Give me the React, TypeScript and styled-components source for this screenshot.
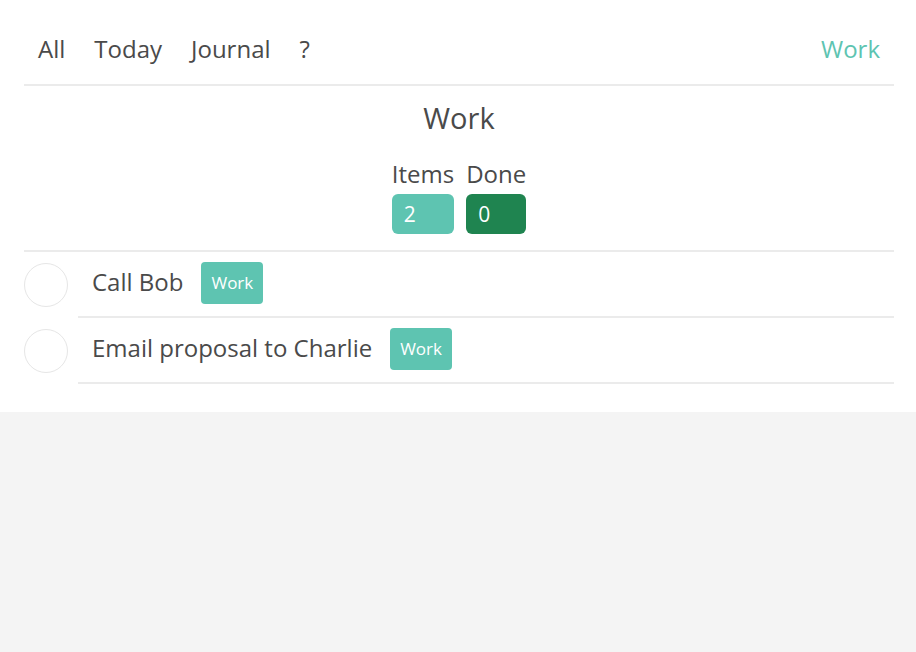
import React from "react";
import styled, { createGlobalStyle } from "styled-components";

const Global = createGlobalStyle`
  html, body { margin: 0; padding: 0; background: #f4f4f4; }
  body { font-family: "Open Sans", "Liberation Sans", sans-serif; color: #4a4a4a; }
`;

const Page = styled.div`
  background: #ffffff;
  padding: 0 22px 28px 24px;
`;

const Nav = styled.nav`
  display: flex;
  align-items: center;
  height: 86px;
  border-bottom: 2px solid #ebebeb;
  box-sizing: border-box;
  padding: 12px 14px 0;
  font-size: 24px;
`;

const NavLink = styled.a<{ $active?: boolean; $right?: boolean }>`
  color: ${(p) => (p.$active ? "#5ec4b1" : "#4a4a4a")};
  margin-right: ${(p) => (p.$right ? "0" : "29px")};
  margin-left: ${(p) => (p.$right ? "auto" : "0")};
  cursor: pointer;
`;

const Header = styled.section`
  display: flex;
  flex-direction: column;
  align-items: center;
  padding-top: 14px;
  padding-bottom: 16px;
  border-bottom: 2px solid #ebebeb;
`;

const Title = styled.h1`
  margin: 0;
  font-size: 29px;
  font-weight: 400;
  line-height: 36px;
`;

const Stats = styled.div`
  display: flex;
  gap: 12px;
  margin-top: 24px;
`;

const Stat = styled.div`
  display: flex;
  flex-direction: column;
  align-items: flex-start;
`;

const StatLabel = styled.div`
  font-size: 24px;
  line-height: 28px;
`;

const StatValue = styled.div<{ $bg: string; $w: number }>`
  width: ${(p) => p.$w}px;
  height: 40px;
  box-sizing: border-box;
  border-radius: 6px;
  background: ${(p) => p.$bg};
  color: #fff;
  font-size: 21px;
  line-height: 40px;
  padding-left: 12px;
  margin-top: 6px;
`;

const List = styled.ul`
  list-style: none;
  margin: 0;
  padding: 0;
`;

const Item = styled.li`
  display: flex;
  align-items: center;
  height: 66px;
`;

const Check = styled.span`
  flex: none;
  width: 44px;
  height: 44px;
  box-sizing: border-box;
  border: 1.5px solid #e6e6e6;
  border-radius: 50%;
  margin-right: 10px;
`;

const ItemBody = styled.div`
  flex: 1;
  align-self: stretch;
  display: flex;
  align-items: center;
  padding: 0 0 2px 14px;
  border-bottom: 2px solid #ebebeb;
`;

const ItemText = styled.span`
  font-size: 24px;
  margin-right: 18px;
  margin-bottom: 4px;
`;

const Tag = styled.span`
  background: #5ec4b1;
  color: #fff;
  font-size: 17px;
  border-radius: 4px;
  height: 42px;
  line-height: 41px;
  padding: 0 10px;
  box-sizing: border-box;
`;

export default function App() {
  return (
    <>
      <Global />
      <Page>
        <Nav>
          <NavLink>All</NavLink>
          <NavLink>Today</NavLink>
          <NavLink>Journal</NavLink>
          <NavLink>?</NavLink>
          <NavLink $active $right>Work</NavLink>
        </Nav>
        <Header>
          <Title>Work</Title>
          <Stats>
            <Stat>
              <StatLabel>Items</StatLabel>
              <StatValue $bg="#5ec4b1" $w={62}>2</StatValue>
            </Stat>
            <Stat>
              <StatLabel>Done</StatLabel>
              <StatValue $bg="#1f8450" $w={60}>0</StatValue>
            </Stat>
          </Stats>
        </Header>
        <List>
          <Item>
            <Check />
            <ItemBody>
              <ItemText>Call Bob</ItemText>
              <Tag>Work</Tag>
            </ItemBody>
          </Item>
          <Item>
            <Check />
            <ItemBody>
              <ItemText>Email proposal to Charlie</ItemText>
              <Tag>Work</Tag>
            </ItemBody>
          </Item>
        </List>
      </Page>
    </>
  );
}
